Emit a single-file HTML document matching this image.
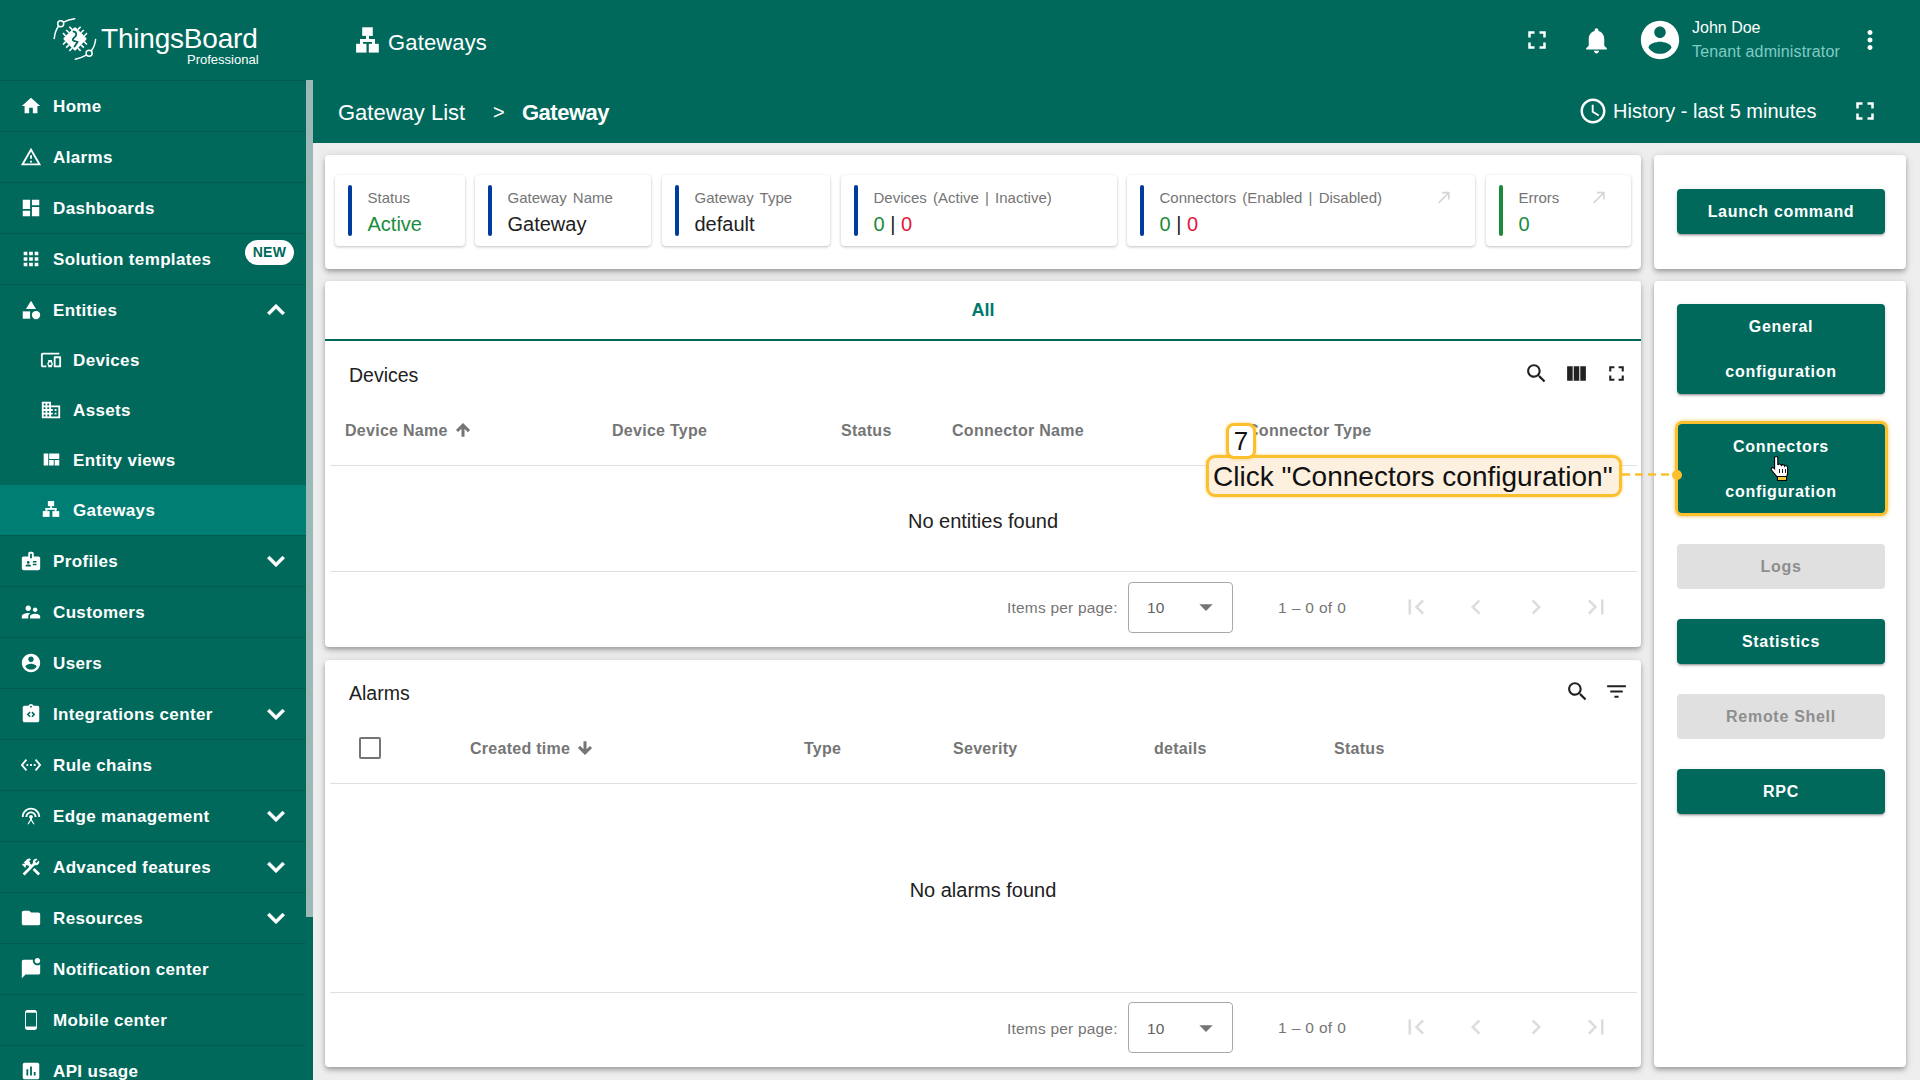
<!DOCTYPE html>
<html><head><meta charset="utf-8">
<style>
*{box-sizing:border-box;margin:0;padding:0}
html,body{width:1920px;height:1080px;overflow:hidden;background:#eeeeee;font-family:"Liberation Sans",sans-serif;}
.abs{position:absolute}
#top{position:absolute;left:0;top:0;width:1920px;height:80px;background:#00695c}
#side{position:absolute;left:0;top:80px;width:306px;height:1000px;background:#00695c;overflow:hidden}
#sbtrack{position:absolute;left:306px;top:80px;width:7px;height:1000px;background:#00695c}
#sbthumb{position:absolute;left:306px;top:80px;width:7px;height:837px;background:#9bb9b6}
#phead{position:absolute;left:313px;top:80px;width:1607px;height:63px;background:#00695c}
.nav{position:absolute;left:0;width:306px;color:#fff;font-weight:bold;font-size:17px;letter-spacing:0.35px}
.nav .t{position:absolute;left:53px;top:50%;transform:translateY(-45%);white-space:nowrap}
.nav svg{position:absolute;left:20px;top:50%;transform:translateY(-50%);width:22px;height:22px;fill:#fff}
.nav.sub .t{left:73px}
.nav.sub svg{left:40px}
.nav .sep{position:absolute;left:0;top:0;width:306px;height:1px;background:rgba(0,0,0,.13)}
.nav svg.chev{position:absolute;left:259px;top:50%;transform:translateY(-50%);width:34px;height:34px;fill:#fff;stroke:#fff;stroke-width:0.6}
.card{position:absolute;background:#fff;border-radius:4px;box-shadow:0 2px 4px -1px rgba(0,0,0,.2),0 4px 5px 0 rgba(0,0,0,.14),0 1px 10px 0 rgba(0,0,0,.12)}
.ic{position:absolute;background:#fff;border-radius:4px;box-shadow:0 1px 3px rgba(0,0,0,.25)}
.ic .bar{position:absolute;left:12.5px;top:10px;width:4px;height:51px;background:#003c9e;border-radius:2px}
.ic .lb{position:absolute;left:32.5px;top:14px;font-size:15px;word-spacing:2px;color:#757575;white-space:nowrap}
.ic .vl{position:absolute;left:32.5px;top:38px;font-size:20px;color:#212121;white-space:nowrap}
.th{position:absolute;margin-top:1.5px;font-size:16px;letter-spacing:0.28px;font-weight:bold;color:#757575;white-space:nowrap}
.btn{position:absolute;left:1677px;width:208px;border-radius:4px;background:#00695c;color:#fff;font-weight:bold;font-size:16px;letter-spacing:0.7px;text-align:center;box-shadow:0 3px 1px -2px rgba(0,0,0,.2),0 2px 2px 0 rgba(0,0,0,.14),0 1px 5px 0 rgba(0,0,0,.12)}
.btn.dis{background:#e0e0e0;color:#8e8e8e;box-shadow:none}
.pg{position:absolute;margin-top:0px;font-size:15.5px;letter-spacing:0.2px;color:#757575;white-space:nowrap}
</style></head><body>
<div id="top"></div>
<div id="phead"></div>
<div id="side">
<div class="nav" style="top:0px;height:51px;"><div class="sep"></div><svg viewBox="0 0 24 24"><path d="M10 20v-6h4v6h5v-8h3L12 3 2 12h3v8z"/></svg><span class="t">Home</span></div>
<div class="nav" style="top:51px;height:51px;"><div class="sep"></div><svg viewBox="0 0 24 24"><path d="M12 5.99L19.53 19H4.47L12 5.99M12 2L1 21h22L12 2zm1 14h-2v2h2v-2zm0-6h-2v4h2v-4z"/></svg><span class="t">Alarms</span></div>
<div class="nav" style="top:102px;height:51px;"><div class="sep"></div><svg viewBox="0 0 24 24"><path d="M3 13h8V3H3v10zm0 8h8v-6H3v6zm10 0h8V11h-8v10zm0-18v6h8V3h-8z"/></svg><span class="t">Dashboards</span></div>
<div class="nav" style="top:153px;height:51px;"><div class="sep"></div><svg viewBox="0 0 24 24"><path d="M4 8h4V4H4v4zm6 12h4v-4h-4v4zm-6 0h4v-4H4v4zm0-6h4v-4H4v4zm6 0h4v-4h-4v4zm6-10v4h4V4h-4zm-6 4h4V4h-4v4zm6 6h4v-4h-4v4zm0 6h4v-4h-4v4z"/></svg><span class="t">Solution templates</span><div style="position:absolute;left:245px;top:7px;width:49px;height:25px;border-radius:13px;background:#fff;color:#00695c;font-size:14px;font-weight:bold;text-align:center;line-height:25px">NEW</div></div>
<div class="nav" style="top:204px;height:51px;"><div class="sep"></div><svg viewBox="0 0 24 24"><path d="M12 2l-5.5 9h11z"/><circle cx="17.5" cy="17.5" r="4.5"/><path d="M3 13.5h8v8H3z"/></svg><span class="t">Entities</span><svg class="chev" viewBox="0 0 24 24"><path d="M7.41 15.41L12 10.83l4.59 4.58L18 14l-6-6-6 6z"/></svg></div>
<div class="nav sub" style="top:255px;height:50px;"><svg viewBox="0 0 24 24"><path d="M3 6h18V4H3c-1.1 0-2 .9-2 2v12c0 1.1.9 2 2 2h4v-2H3V6zm10 6H9v1.78c-.61.55-1 1.33-1 2.22s.39 1.67 1 2.22V20h4v-1.78c.61-.55 1-1.34 1-2.22s-.39-1.67-1-2.22V12zm-2 5.5c-.83 0-1.5-.67-1.5-1.5s.67-1.5 1.5-1.5 1.5.67 1.5 1.5-.67 1.5-1.5 1.5zM22 8h-6c-.5 0-1 .5-1 1v10c0 .5.5 1 1 1h6c.5 0 1-.5 1-1V9c0-.5-.5-1-1-1zm-1 10h-4v-8h4v8z"/></svg><span class="t">Devices</span></div>
<div class="nav sub" style="top:305px;height:50px;"><svg viewBox="0 0 24 24"><path d="M12 7V3H2v18h20V7H12zM6 19H4v-2h2v2zm0-4H4v-2h2v2zm0-4H4V9h2v2zm0-4H4V5h2v2zm4 12H8v-2h2v2zm0-4H8v-2h2v2zm0-4H8V9h2v2zm0-4H8V5h2v2zm10 12h-8v-2h2v-2h-2v-2h2v-2h-2V9h8v10zm-2-8h-2v2h2v-2zm0 4h-2v2h2v-2z"/></svg><span class="t">Assets</span></div>
<div class="nav sub" style="top:355px;height:50px;"><svg viewBox="0 0 24 24"><path d="M10 18h5v-6h-5v6zm-6 0h5V5H4v13zm12 0h5v-6h-5v6zM10 5v6h11V5H10z"/></svg><span class="t">Entity views</span></div>
<div class="nav sub" style="top:405px;height:50px;background:#007e73;"><svg viewBox="0 0 24 24"><rect x="8.6" y="2.2" width="6.8" height="5.6"/><rect x="11" y="7.8" width="2" height="2.4"/><rect x="6" y="9.8" width="12" height="2"/><rect x="6" y="9.8" width="2" height="3.5"/><rect x="16" y="9.8" width="2" height="3.5"/><rect x="3" y="13.2" width="7.5" height="6.3"/><rect x="13.5" y="13.2" width="7.5" height="6.3"/></svg><span class="t">Gateways</span></div>
<div class="nav" style="top:455px;height:51px;"><div class="sep"></div><svg viewBox="0 0 24 24"><path d="M20 7h-5V4c0-1.1-.9-2-2-2h-2c-1.1 0-2 .9-2 2v3H4c-1.1 0-2 .9-2 2v11c0 1.1.9 2 2 2h16c1.1 0 2-.9 2-2V9c0-1.1-.9-2-2-2zM9 12c.83 0 1.5.67 1.5 1.5S9.83 15 9 15s-1.5-.67-1.5-1.5S8.17 12 9 12zm3 6H6v-.43c0-.6.36-1.15.92-1.39.64-.28 1.34-.43 2.08-.43s1.44.15 2.08.43c.55.24.92.78.92 1.39V18zm1-9h-2V4h2v5zm5 7.5h-4V15h4v1.5zm0-3h-4V12h4v1.5z"/></svg><span class="t">Profiles</span><svg class="chev" viewBox="0 0 24 24"><path d="M7.41 8.59L12 13.17l4.59-4.58L18 10l-6 6-6-6 1.41-1.41z"/></svg></div>
<div class="nav" style="top:506px;height:51px;"><div class="sep"></div><svg viewBox="0 0 24 24"><path d="M16.5 12c1.38 0 2.49-1.12 2.49-2.5S17.88 7 16.5 7C15.12 7 14 8.12 14 9.5s1.12 2.5 2.5 2.5zM9 11c1.66 0 2.99-1.34 2.99-3S10.66 5 9 5C7.34 5 6 6.34 6 8s1.34 3 3 3zm7.5 3c-1.83 0-5.5.92-5.5 2.75V19h11v-2.25c0-1.83-3.67-2.75-5.5-2.75zM9 13c-2.33 0-7 1.17-7 3.5V19h7v-2.25c0-.85.33-2.34 2.37-3.47C10.5 13.1 9.66 13 9 13z"/></svg><span class="t">Customers</span></div>
<div class="nav" style="top:557px;height:51px;"><div class="sep"></div><svg viewBox="0 0 24 24"><path d="M12 2C6.48 2 2 6.48 2 12s4.48 10 10 10 10-4.48 10-10S17.52 2 12 2zm0 3c1.66 0 3 1.34 3 3s-1.34 3-3 3-3-1.34-3-3 1.34-3 3-3zm0 14.2c-2.5 0-4.71-1.28-6-3.22.03-1.99 4-3.08 6-3.08 1.99 0 5.97 1.09 6 3.08-1.29 1.94-3.5 3.22-6 3.22z"/></svg><span class="t">Users</span></div>
<div class="nav" style="top:608px;height:51px;"><div class="sep"></div><svg viewBox="0 0 24 24"><path d="M19 3h-4.18C14.4 1.84 13.3 1 12 1s-2.4.84-2.82 2H5c-1.1 0-2 .9-2 2v14c0 1.1.9 2 2 2h14c1.1 0 2-.9 2-2V5c0-1.1-.9-2-2-2zm-7 0c.55 0 1 .45 1 1s-.45 1-1 1-1-.45-1-1 .45-1 1-1z" /><path fill="#00695c" d="M10.4 9.4L7.3 12.5l3.1 3.1 1.2-1.2-1.9-1.9 1.9-1.9zM13.6 9.4l-1.2 1.2 1.9 1.9-1.9 1.9 1.2 1.2 3.1-3.1z"/></svg><span class="t">Integrations center</span><svg class="chev" viewBox="0 0 24 24"><path d="M7.41 8.59L12 13.17l4.59-4.58L18 10l-6 6-6-6 1.41-1.41z"/></svg></div>
<div class="nav" style="top:659px;height:51px;"><div class="sep"></div><svg viewBox="0 0 24 24"><path d="M7.77 6.76L6.23 5.48.82 12l5.41 6.52 1.54-1.28L3.42 12l4.35-5.24zM7 13h2v-2H7v2zm10-2h-2v2h2v-2zm-6 2h2v-2h-2v2zm6.77-7.52l-1.54 1.28L20.58 12l-4.35 5.24 1.54 1.28L23.18 12l-5.41-6.52z"/></svg><span class="t">Rule chains</span></div>
<div class="nav" style="top:710px;height:51px;"><div class="sep"></div><svg viewBox="0 0 24 24"><path d="M12 11c-1.1 0-2 .9-2 2 0 .74.4 1.38 1 1.72V16l-3 5h1.5l2.5-4 2.5 4H16l-3-5v-1.28c.6-.34 1-.98 1-1.72 0-1.1-.9-2-2-2zm0-4c-3.31 0-6 2.69-6 6h2c0-2.21 1.79-4 4-4s4 1.79 4 4h2c0-3.31-2.69-6-6-6zm0-4C6.48 3 2 7.48 2 13h2c0-4.42 3.58-8 8-8s8 3.58 8 8h2c0-5.52-4.48-10-10-10z"/></svg><span class="t">Edge management</span><svg class="chev" viewBox="0 0 24 24"><path d="M7.41 8.59L12 13.17l4.59-4.58L18 10l-6 6-6-6 1.41-1.41z"/></svg></div>
<div class="nav" style="top:761px;height:51px;"><div class="sep"></div><svg viewBox="0 0 24 24"><path d="M13.78 15.17l2.12-2.12 6.01 6.01-2.12 2.12zM17.5 10c1.93 0 3.5-1.57 3.5-3.5 0-.58-.16-1.12-.41-1.6l-2.7 2.7-1.49-1.49 2.7-2.7c-.48-.25-1.02-.41-1.6-.41C15.57 3 14 4.57 14 6.5c0 .41.08.8.21 1.16l-1.85 1.85-1.78-1.78.71-.71-1.41-1.41L12 3.49c-1.17-1.17-3.07-1.17-4.24 0L4.22 7.03l1.41 1.41H2.81l-.71.71 3.54 3.54.71-.71V9.15l1.41 1.41.71-.71 1.78 1.78-7.41 7.41 2.12 2.12L16.34 9.79c.36.13.75.21 1.16.21z"/></svg><span class="t">Advanced features</span><svg class="chev" viewBox="0 0 24 24"><path d="M7.41 8.59L12 13.17l4.59-4.58L18 10l-6 6-6-6 1.41-1.41z"/></svg></div>
<div class="nav" style="top:812px;height:51px;"><div class="sep"></div><svg viewBox="0 0 24 24"><path d="M10 4H4c-1.1 0-1.99.9-1.99 2L2 18c0 1.1.9 2 2 2h16c1.1 0 2-.9 2-2V8c0-1.1-.9-2-2-2h-8l-2-2z"/></svg><span class="t">Resources</span><svg class="chev" viewBox="0 0 24 24"><path d="M7.41 8.59L12 13.17l4.59-4.58L18 10l-6 6-6-6 1.41-1.41z"/></svg></div>
<div class="nav" style="top:863px;height:51px;"><div class="sep"></div><svg viewBox="0 0 24 24"><path d="M22 6.98V16c0 1.1-.9 2-2 2H6l-4 4V4c0-1.1.9-2 2-2h10.1c-.06.32-.1.66-.1 1 0 2.76 2.24 5 5 5 1.13 0 2.16-.39 3-1.02zM16 3c0 1.66 1.34 3 3 3s3-1.34 3-3-1.34-3-3-3-3 1.34-3 3z"/></svg><span class="t">Notification center</span></div>
<div class="nav" style="top:914px;height:51px;"><div class="sep"></div><svg viewBox="0 0 24 24"><path d="M15.5 1h-8C6.12 1 5 2.12 5 3.5v17C5 21.88 6.12 23 7.5 23h8c1.38 0 2.5-1.12 2.5-2.5v-17C18 2.12 16.88 1 15.5 1zM17 19H6V4h11v15z" transform="translate(0.5 0)"/></svg><span class="t">Mobile center</span></div>
<div class="nav" style="top:965px;height:51px;"><div class="sep"></div><svg viewBox="0 0 24 24"><path d="M19 3H5c-1.1 0-2 .9-2 2v14c0 1.1.9 2 2 2h14c1.1 0 2-.9 2-2V5c0-1.1-.9-2-2-2zM9 17H7v-7h2v7zm4 0h-2V7h2v10zm4 0h-2v-4h2v4z"/></svg><span class="t">API usage</span></div>
</div>
<div id="sbtrack"></div>
<div id="sbthumb"></div>

<!-- logo -->
<svg class="abs" style="left:50px;top:15px" width="50" height="50" viewBox="0 0 50 50">
 <g fill="none" stroke="#fff" stroke-width="1.5" stroke-linecap="round">
  <path d="M4.2 23.5 Q5.2 15.5 8.5 11.3"/><circle cx="10.7" cy="8.8" r="3"/><path d="M13.5 7.2 Q18.5 4.6 24.7 3.8"/>
  <path d="M45.6 24.5 Q44.8 31.5 41.3 35.8"/><circle cx="39.1" cy="38.3" r="3"/><path d="M36.3 40.2 Q31 43.2 25.3 44.2"/>
 </g>
 <g transform="translate(25 23.8) rotate(45)">
  <rect x="-8.6" y="-8.6" width="17.2" height="17.2" rx="1.5" fill="#fff"/>
  <g stroke="#fff" stroke-width="1.6">
   <path d="M-12.5 -4.5h4M-12.5 0h4M-12.5 4.5h4M8.5 -4.5h4M8.5 0h4M8.5 4.5h4M-4.5 -12.5v4M0 -12.5v4M4.5 -12.5v4M-4.5 8.5v4M0 8.5v4M4.5 8.5v4"/>
  </g>
 </g>
 <path d="M23.5 16.5 Q27 17 26 20.5 L23 24 Q22.2 25.5 24.5 26 L27.5 27 Q26 29.5 24.5 31.5" fill="none" stroke="#00695c" stroke-width="1.8" stroke-linecap="round"/>
</svg>
<div class="abs" style="left:101px;top:23px;font-size:28px;color:#fff;letter-spacing:-0.2px;white-space:nowrap">ThingsBoard</div>
<div class="abs" style="left:187px;top:52px;font-size:13px;color:#fff;white-space:nowrap">Professional</div>
<!-- gateways title -->
<svg class="abs" style="left:356px;top:27px" width="23" height="26" viewBox="0 0 23 26">
 <g fill="#fff"><rect x="6.2" y="0.3" width="10.6" height="8.6"/><rect x="10" y="8.9" width="3" height="3.5"/><rect x="4" y="12" width="15" height="3"/><rect x="4" y="12" width="3" height="5"/><rect x="16" y="12" width="3" height="5"/><rect x="0.1" y="16.8" width="10.4" height="8.8"/><rect x="12.8" y="16.8" width="10" height="8.8"/></g>
</svg>
<div class="abs" style="left:388px;top:30px;font-size:22px;color:#fff;letter-spacing:0.15px;white-space:nowrap">Gateways</div>
<!-- right header -->
<svg class="abs" style="left:1522px;top:25px" width="30" height="30" viewBox="0 0 24 24"><path fill="#fff" d="M7 14H5v5h5v-2H7v-3zm-2-4h2V7h3V5H5v5zm12 7h-3v2h5v-5h-2v3zM14 5v2h3v3h2V5h-5z"/></svg>
<svg class="abs" style="left:1581px;top:25px" width="31" height="31" viewBox="0 0 24 24"><path fill="#fff" d="M12 22c1.1 0 2-.9 2-2h-4c0 1.1.89 2 2 2zm6-6v-5c0-3.07-1.64-5.64-4.5-6.32V4c0-.83-.67-1.5-1.5-1.5s-1.5.67-1.5 1.5v.68C7.63 5.36 6 7.92 6 11v5l-2 2v1h16v-1l-2-2z"/></svg>
<svg class="abs" style="left:1637px;top:17px" width="46" height="46" viewBox="0 0 24 24"><path fill="#fff" d="M12 2C6.48 2 2 6.48 2 12s4.48 10 10 10 10-4.48 10-10S17.52 2 12 2zm0 3c1.66 0 3 1.34 3 3s-1.34 3-3 3-3-1.34-3-3 1.34-3 3-3zm0 14.2c-2.5 0-4.71-1.28-6-3.22.03-1.99 4-3.08 6-3.08 1.99 0 5.97 1.09 6 3.08-1.29 1.94-3.5 3.22-6 3.22z"/></svg>
<div class="abs" style="left:1692px;top:19px;font-size:16px;color:#fff;white-space:nowrap">John Doe</div>
<div class="abs" style="left:1692px;top:43px;font-size:16px;color:#80cbc4;letter-spacing:0.15px;white-space:nowrap">Tenant administrator</div>
<svg class="abs" style="left:1855px;top:25px" width="30" height="30" viewBox="0 0 24 24"><path fill="#fff" d="M12 8c1.1 0 2-.9 2-2s-.9-2-2-2-2 .9-2 2 .9 2 2 2zm0 2c-1.1 0-2 .9-2 2s.9 2 2 2 2-.9 2-2-.9-2-2-2zm0 6c-1.1 0-2 .9-2 2s.9 2 2 2 2-.9 2-2-.9-2-2-2z"/></svg>
<!-- page header -->
<div class="abs" style="left:338px;top:99.5px;font-size:22px;color:#fff;white-space:nowrap">Gateway List</div>
<div class="abs" style="left:493px;top:101px;font-size:20px;color:#fff;white-space:nowrap">&gt;</div>
<div class="abs" style="left:522px;top:99.5px;font-size:22px;font-weight:bold;letter-spacing:-0.5px;color:#fff;white-space:nowrap">Gateway</div>
<svg class="abs" style="left:1578px;top:96px" width="30" height="30" viewBox="0 0 24 24"><path fill="#fff" d="M11.99 2C6.47 2 2 6.48 2 12s4.47 10 9.99 10C17.52 22 22 17.52 22 12S17.52 2 11.99 2zM12 20c-4.42 0-8-3.58-8-8s3.58-8 8-8 8 3.58 8 8-3.58 8-8 8zm.5-13H11v6l5.25 3.15.75-1.23-4.5-2.67z"/></svg>
<div class="abs" style="left:1613px;top:100px;font-size:20px;color:#fff;white-space:nowrap">History - last 5 minutes</div>
<svg class="abs" style="left:1850px;top:96px" width="30" height="30" viewBox="0 0 24 24"><path fill="#fff" d="M7 14H5v5h5v-2H7v-3zm-2-4h2V7h3V5H5v5zm12 7h-3v2h5v-5h-2v3zM14 5v2h3v3h2V5h-5z"/></svg>


<!-- card 1 -->
<div class="card" style="left:325px;top:155px;width:1316px;height:114px"></div>
<div class="ic" style="left:335px;top:175px;width:130px;height:71px"><div class="bar"></div><div class="lb">Status</div><div class="vl" style="color:#198c3c">Active</div></div>
<div class="ic" style="left:475px;top:175px;width:176px;height:71px"><div class="bar"></div><div class="lb">Gateway Name</div><div class="vl">Gateway</div></div>
<div class="ic" style="left:662px;top:175px;width:168px;height:71px"><div class="bar"></div><div class="lb">Gateway Type</div><div class="vl">default</div></div>
<div class="ic" style="left:841px;top:175px;width:276px;height:71px"><div class="bar"></div><div class="lb">Devices (Active | Inactive)</div><div class="vl"><span style="color:#198c3c">0</span> | <span style="color:#e0193a">0</span></div></div>
<div class="ic" style="left:1127px;top:175px;width:348px;height:71px"><div class="bar"></div><div class="lb">Connectors (Enabled | Disabled)</div><div class="vl"><span style="color:#198c3c">0</span> | <span style="color:#e0193a">0</span></div>
 <svg style="position:absolute;left:308px;top:13px" width="18.5" height="18.5" viewBox="0 0 24 24"><path fill="#d4d4d4" d="M9 5v2h6.59L4 18.59 5.41 20 17 8.41V15h2V5z"/></svg></div>
<div class="ic" style="left:1486px;top:175px;width:145px;height:71px"><div class="bar" style="background:#198c3c"></div><div class="lb">Errors</div><div class="vl" style="color:#198c3c">0</div>
 <svg style="position:absolute;left:104px;top:13px" width="18.5" height="18.5" viewBox="0 0 24 24"><path fill="#d4d4d4" d="M9 5v2h6.59L4 18.59 5.41 20 17 8.41V15h2V5z"/></svg></div>

<!-- card 2 -->
<div class="card" style="left:325px;top:281px;width:1316px;height:366px"></div>
<div class="abs" style="left:325px;top:300px;width:1316px;text-align:center;font-size:18px;font-weight:bold;color:#00776b">All</div>
<div class="abs" style="left:325px;top:339px;width:1316px;height:2px;background:#00695c"></div>
<div class="abs" style="left:349px;top:364px;font-size:19.5px;color:#212121">Devices</div>
<svg class="abs" style="left:1524px;top:361px" width="25" height="25" viewBox="0 0 24 24" fill="#212121"><path d="M15.5 14h-.79l-.28-.27C15.41 12.59 16 11.11 16 9.5 16 5.91 13.09 3 9.5 3S3 5.91 3 9.5 5.91 16 9.5 16c1.61 0 3.09-.59 4.23-1.57l.27.28v.79l5 4.99L20.49 19l-4.99-5zm-6 0C7.01 14 5 11.99 5 9.5S7.01 5 9.5 5 14 7.01 14 9.5 11.99 14 9.5 14z"/></svg>
<svg class="abs" style="left:1564px;top:361px" width="25" height="25" viewBox="0 0 24 24" fill="#212121"><path d="M14.67 5v14H9.33V5h5.34zm1 14H21V5h-5.33v14zm-7.34 0V5H3v14h5.33z"/></svg>
<svg class="abs" style="left:1604px;top:361px" width="25" height="25" viewBox="0 0 24 24" fill="#212121"><path d="M7 14H5v5h5v-2H7v-3zm-2-4h2V7h3V5H5v5zm12 7h-3v2h5v-5h-2v3zM14 5v2h3v3h2V5h-5z"/></svg>
<div class="th" style="left:345px;top:420px">Device Name</div>
<svg class="abs" style="left:454px;top:421px" width="18" height="18" viewBox="0 0 24 24" fill="#757575" stroke="#757575" stroke-width="2"><path d="M4 12l1.41 1.41L11 7.83V20h2V7.83l5.58 5.59L20 12l-8-8-8 8z"/></svg>
<div class="th" style="left:612px;top:420px">Device Type</div>
<div class="th" style="left:841px;top:420px">Status</div>
<div class="th" style="left:952px;top:420px">Connector Name</div>
<div class="th" style="left:1247px;top:420px">Connector Type</div>
<div class="abs" style="left:330px;top:465px;width:1307px;height:1px;background:#e0e0e0"></div>
<div class="abs" style="left:325px;top:510px;width:1316px;text-align:center;font-size:20px;color:#212121">No entities found</div>
<div class="abs" style="left:330px;top:571px;width:1307px;height:1px;background:#e0e0e0"></div>
<div class="pg" style="left:1007px;top:599px">Items per page:</div>
<div class="abs" style="left:1128px;top:581.5px;width:105px;height:51px;border:1px solid #a8a8a8;border-radius:4px"></div>
<div class="pg" style="left:1147px;top:599px;color:#616161">10</div>
<svg class="abs" style="left:1190px;top:591px" width="32" height="32" viewBox="0 0 24 24" fill="#757575"><path d="M7 10l5 5 5-5z"/></svg>
<div class="pg" style="left:1278px;top:599px;letter-spacing:0.35px">1 – 0 of 0</div>
<svg class="abs" style="left:1401px;top:592px" width="30" height="30" viewBox="0 0 24 24" fill="#dcdcdc"><path d="M18.41 16.59L13.82 12l4.59-4.59L17 6l-6 6 6 6zM6 6h2v12H6z"/></svg>
<svg class="abs" style="left:1460.5px;top:592px" width="30" height="30" viewBox="0 0 24 24" fill="#dcdcdc"><path d="M15.41 7.41L14 6l-6 6 6 6 1.41-1.41L10.83 12z"/></svg>
<svg class="abs" style="left:1520.5px;top:592px" width="30" height="30" viewBox="0 0 24 24" fill="#dcdcdc"><path d="M10 6L8.59 7.41 13.17 12l-4.58 4.59L10 18l6-6z"/></svg>
<svg class="abs" style="left:1580.5px;top:592px" width="30" height="30" viewBox="0 0 24 24" fill="#dcdcdc"><path d="M5.59 7.41L10.18 12l-4.59 4.59L7 18l6-6-6-6zM16 6h2v12h-2z"/></svg>

<!-- card 3 -->
<div class="card" style="left:325px;top:660px;width:1316px;height:407px"></div>
<div class="abs" style="left:349px;top:682px;font-size:19.5px;color:#212121">Alarms</div>
<svg class="abs" style="left:1565px;top:679px" width="25" height="25" viewBox="0 0 24 24" fill="#212121"><path d="M15.5 14h-.79l-.28-.27C15.41 12.59 16 11.11 16 9.5 16 5.91 13.09 3 9.5 3S3 5.91 3 9.5 5.91 16 9.5 16c1.61 0 3.09-.59 4.23-1.57l.27.28v.79l5 4.99L20.49 19l-4.99-5zm-6 0C7.01 14 5 11.99 5 9.5S7.01 5 9.5 5 14 7.01 14 9.5 11.99 14 9.5 14z"/></svg>
<svg class="abs" style="left:1604px;top:679px" width="25" height="25" viewBox="0 0 24 24" fill="#212121"><path d="M10 18h4v-2h-4v2zM3 6v2h18V6H3zm3 7h12v-2H6v2z"/></svg>
<div class="abs" style="left:359px;top:737px;width:22px;height:22px;border:2px solid #757575;border-radius:2px"></div>
<div class="th" style="left:470px;top:738px">Created time</div>
<svg class="abs" style="left:576px;top:739px" width="18" height="18" viewBox="0 0 24 24" fill="#757575" stroke="#757575" stroke-width="2"><path d="M20 12l-1.41-1.41L13 16.17V4h-2v12.17l-5.58-5.59L4 12l8 8 8-8z"/></svg>
<div class="th" style="left:804px;top:738px">Type</div>
<div class="th" style="left:953px;top:738px">Severity</div>
<div class="th" style="left:1154px;top:738px">details</div>
<div class="th" style="left:1334px;top:738px">Status</div>
<div class="abs" style="left:330px;top:783px;width:1307px;height:1px;background:#e0e0e0"></div>
<div class="abs" style="left:325px;top:879px;width:1316px;text-align:center;font-size:20px;color:#212121">No alarms found</div>
<div class="abs" style="left:330px;top:992px;width:1307px;height:1px;background:#e0e0e0"></div>
<div class="pg" style="left:1007px;top:1020px">Items per page:</div>
<div class="abs" style="left:1128px;top:1002px;width:105px;height:51px;border:1px solid #a8a8a8;border-radius:4px"></div>
<div class="pg" style="left:1147px;top:1020px;color:#616161">10</div>
<svg class="abs" style="left:1190px;top:1012px" width="32" height="32" viewBox="0 0 24 24" fill="#757575"><path d="M7 10l5 5 5-5z"/></svg>
<div class="pg" style="left:1278px;top:1019px;letter-spacing:0.35px">1 – 0 of 0</div>
<svg class="abs" style="left:1401px;top:1012px" width="30" height="30" viewBox="0 0 24 24" fill="#dcdcdc"><path d="M18.41 16.59L13.82 12l4.59-4.59L17 6l-6 6 6 6zM6 6h2v12H6z"/></svg>
<svg class="abs" style="left:1460.5px;top:1012px" width="30" height="30" viewBox="0 0 24 24" fill="#dcdcdc"><path d="M15.41 7.41L14 6l-6 6 6 6 1.41-1.41L10.83 12z"/></svg>
<svg class="abs" style="left:1520.5px;top:1012px" width="30" height="30" viewBox="0 0 24 24" fill="#dcdcdc"><path d="M10 6L8.59 7.41 13.17 12l-4.58 4.59L10 18l6-6z"/></svg>
<svg class="abs" style="left:1580.5px;top:1012px" width="30" height="30" viewBox="0 0 24 24" fill="#dcdcdc"><path d="M5.59 7.41L10.18 12l-4.59 4.59L7 18l6-6-6-6zM16 6h2v12h-2z"/></svg>

<!-- right panel -->
<div class="card" style="left:1654px;top:155px;width:252px;height:114px"></div>
<div class="btn" style="top:189px;height:45px;line-height:45px">Launch command</div>
<div class="card" style="left:1654px;top:281px;width:252px;height:786px"></div>
<div class="btn" style="top:304px;height:90px;line-height:45px;padding-top:0px">General<br>configuration</div>
<div class="btn" style="top:424px;height:90px;line-height:45px">Connectors<br>configuration</div>
<div class="btn dis" style="top:544px;height:45px;line-height:45px">Logs</div>
<div class="btn" style="top:619px;height:45px;line-height:45px">Statistics</div>
<div class="btn dis" style="top:694px;height:45px;line-height:45px">Remote Shell</div>
<div class="btn" style="top:769px;height:45px;line-height:45px">RPC</div>

<!-- annotation -->
<div class="abs" style="left:1674.5px;top:421px;width:213px;height:95px;border:3px solid #fcc02e;border-radius:7px;box-shadow:0 0 4px rgba(252,192,46,.7)"></div>
<svg class="abs" style="left:1622px;top:472px" width="56" height="5"><line x1="0" y1="2.5" x2="56" y2="2.5" stroke="#fcc02e" stroke-width="2.5" stroke-dasharray="8 5"/></svg>
<div class="abs" style="left:1672px;top:470px;width:10px;height:10px;border-radius:5px;background:#fcc02e"></div>
<div class="abs" style="left:1206px;top:455px;width:416px;height:42px;background:#fdf0de;border:3px solid #fcc02e;border-radius:9px;box-shadow:0 0 3px rgba(252,192,46,.7)"></div>
<div class="abs" style="left:1213px;top:461px;font-size:28px;color:#111;white-space:nowrap">Click "Connectors configuration"</div>
<div class="abs" style="left:1226px;top:423px;width:30px;height:36px;background:#fff;border:3px solid #fcc02e;border-radius:8px;font-size:26px;color:#111;text-align:center;line-height:30px;box-shadow:0 0 3px rgba(252,192,46,.7)">7</div>

<svg class="abs" style="left:1770px;top:455px" width="20" height="26" viewBox="0 0 20 26">
<path d="M6 1.5c1 0 1.8.8 1.8 1.8V10c.3-.6 1-1 1.7-1 .9 0 1.6.6 1.8 1.4.3-.5.9-.8 1.5-.8 1 0 1.7.7 1.8 1.6.3-.3.7-.5 1.2-.5 1 0 1.8.8 1.8 1.8v5.5c0 2.5-1.2 4.5-3 5.5H8.5C7 22.3 5.5 20 3.5 17.5 2.6 16.4 1.2 15 1.2 14c0-.8.6-1.4 1.4-1.4.8 0 1.6.6 2 1.2V3.3C4.2 2.3 5 1.5 6 1.5z" fill="#fff" stroke="#000" stroke-width="1.1"/>
<path d="M9.5 14v4M12.5 14v4M15.5 14v4" stroke="#000" stroke-width="0.9"/>
<rect x="7.5" y="21.5" width="9" height="4" fill="#f9c23c" stroke="#000" stroke-width="1"/>
</svg>
</body></html>
